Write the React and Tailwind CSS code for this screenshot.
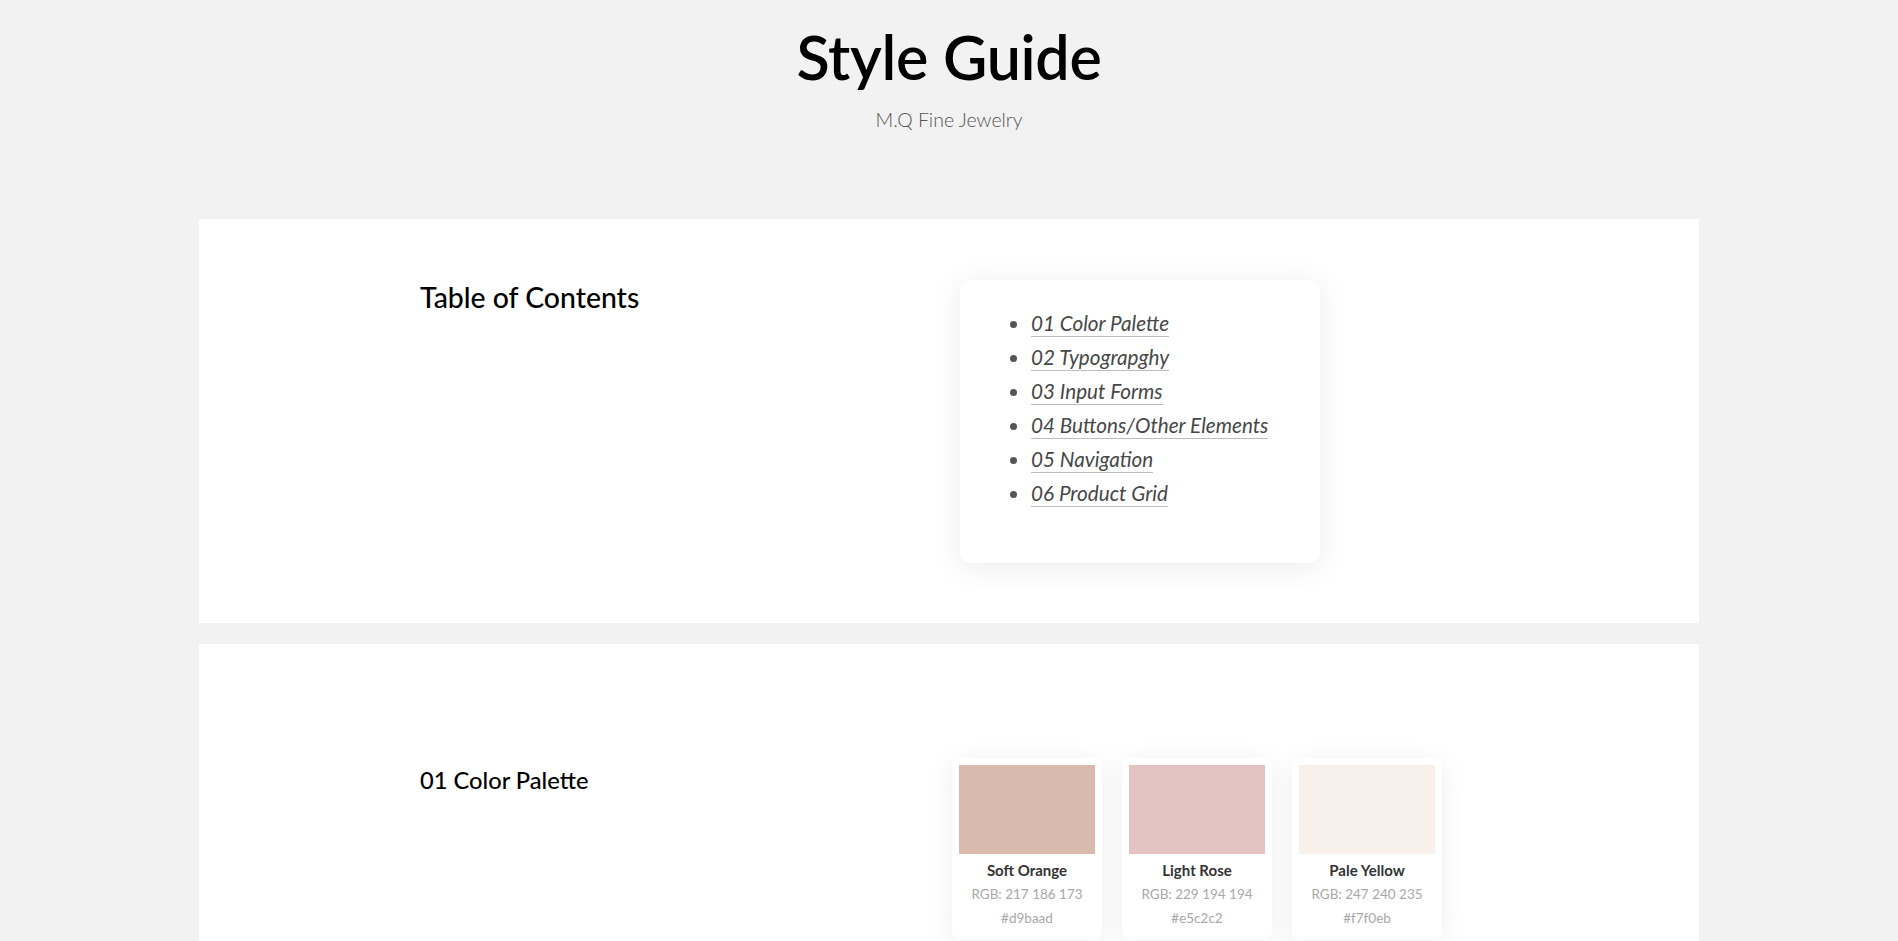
import React from "react";

const toc = [
  "01 Color Palette",
  "02 Typograpghy",
  "03 Input Forms",
  "04 Buttons/Other Elements",
  "05 Navigation",
  "06 Product Grid",
];

const colors = [
  { name: "Soft Orange", rgb: "RGB: 217 186 173", hex: "#d9baad", cls: "bg-[#d9baad]" },
  { name: "Light Rose", rgb: "RGB: 229 194 194", hex: "#e5c2c2", cls: "bg-[#e5c2c2]" },
  { name: "Pale Yellow", rgb: "RGB: 247 240 235", hex: "#f7f0eb", cls: "bg-[#f7f0eb]" },
];

export default function App() {
  return (
    <div className="h-screen overflow-hidden bg-[#f2f2f2] font-['Lato',sans-serif] text-black">
      <header className="pt-[26px] text-center">
        <h1 className="text-[61px] font-semibold leading-none tracking-[-0.3px]">Style Guide</h1>
        <p className="mt-[23px] text-[19.5px] font-light leading-none text-[#555]">M.Q Fine Jewelry</p>
      </header>

      <section className="mx-auto mt-[89px] w-[1500px] bg-white pt-[61px] pb-[60px]">
        <div className="ml-[221px] grid w-[1080px] grid-cols-2">
          <h2 className="mt-[3px] text-[28.4px] font-medium leading-none">Table of Contents</h2>
          <div className="w-[360px] rounded-[10px] bg-white pt-[26px] pb-[53px] shadow-[0_4px_30px_rgba(0,0,0,0.08)]">
            <ul className="list-disc pl-[70px] text-[20.7px] italic leading-[34px] text-[#474747] marker:text-[#555]">
              {toc.map((t) => (
                <li key={t} className="pl-[1px]">
                  <a className="border-b border-[#bdbdbd] pb-[1px]">{t}</a>
                </li>
              ))}
            </ul>
          </div>
        </div>
      </section>

      <section className="mx-auto mt-[21px] w-[1500px] bg-white pt-[114px] pb-[60px]">
        <div className="ml-[221px] grid w-[1080px] grid-cols-2">
          <h2 className="mt-[11px] text-[23.7px] font-medium leading-none">01 Color Palette</h2>
          <div className="-ml-[8px] flex gap-[20px]">
            {colors.map((c) => (
              <div
                key={c.name}
                className="w-[150px] rounded-[8px] bg-white px-[7px] pt-[7px] pb-[12px] text-center shadow-[0_4px_24px_rgba(0,0,0,0.07)]"
              >
                <div className={`h-[89px] w-full ${c.cls}`} />
                <div className="mt-[6px] text-[15px] font-bold leading-[20px] text-[#333]">{c.name}</div>
                <div className="mt-[4px] text-[13.5px] leading-[20px] text-[#a8a8a8]">{c.rgb}</div>
                <div className="mt-[4px] text-[13.5px] leading-[20px] text-[#a8a8a8]">{c.hex}</div>
              </div>
            ))}
          </div>
        </div>
      </section>
    </div>
  );
}
